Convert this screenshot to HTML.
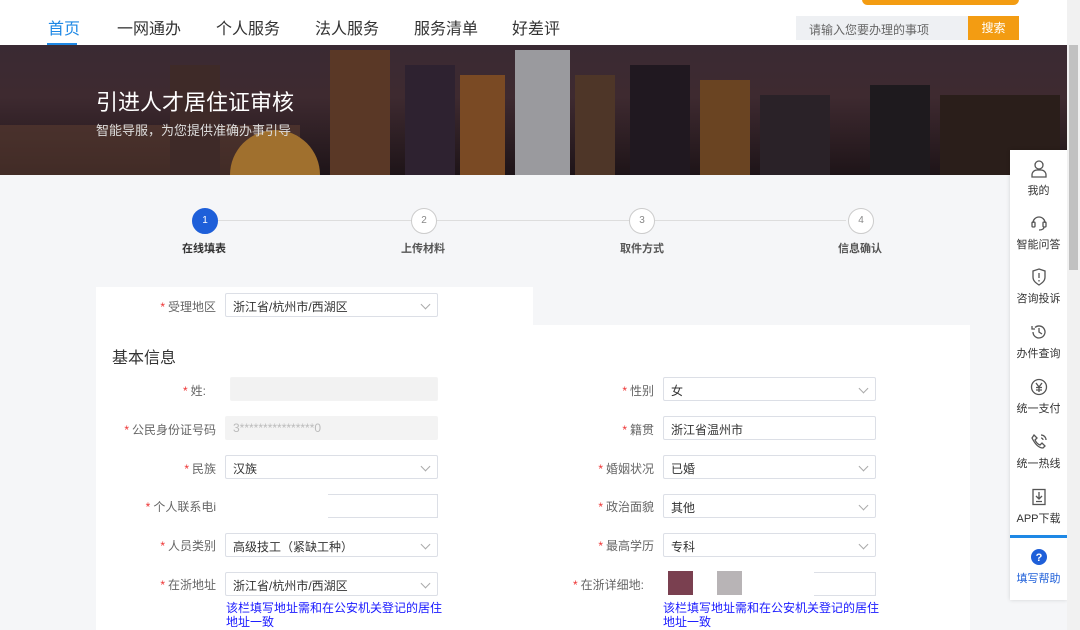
<!DOCTYPE html>
<html><head><meta charset="utf-8"><style>
*{margin:0;padding:0;box-sizing:border-box}
body{width:1080px;height:630px;overflow:hidden;background:#f5f6f8;font-family:"Liberation Sans","Noto Sans CJK SC",sans-serif;position:relative;color:#333}
.nav{position:absolute;left:0;top:0;width:1067px;height:45px;background:#fff}
.nav a{position:absolute;top:15px;font-size:16px;color:#333}
.banner{position:absolute;left:0;top:45px;width:1067px;height:130px;background:linear-gradient(180deg,#3a2a33 0%,#3e2a30 40%,#1e1418 100%);overflow:hidden}
.b{position:absolute;bottom:0}
.sb{position:absolute;left:1067px;top:0;width:13px;height:630px;background:#f1f1f1}
.card{position:absolute;background:#fff}
.lbl{position:absolute;font-size:12px;color:#666;text-align:right;width:130px}
.lbl i{color:#e33;font-style:normal;margin-right:3px}
.inp{position:absolute;width:213px;height:24px;border:1px solid #dcdfe6;background:#fff;font-size:12px;color:#333;padding:4px 7px;border-radius:2px}
.inp.dis{background:#f3f3f3;border-color:#f3f3f3;color:#bbb}
.arr{position:absolute;right:8px;top:7px;width:7px;height:7px;border-right:1px solid #aaa;border-bottom:1px solid #aaa;transform:rotate(45deg)}
.hint{position:absolute;font-size:12px;color:#1a1aff;line-height:14px;width:220px}
.step{position:absolute;top:208px;width:26px;height:26px;border-radius:50%;border:1px solid #ccc;background:#fff;font-size:10px;color:#888;text-align:center;line-height:24px}
.sl{position:absolute;top:240px;font-size:11px;font-weight:bold;color:#555}
.side{position:absolute;left:1010px;top:150px;width:57px;height:450px;background:#fff;box-shadow:0 0 4px rgba(0,0,0,.15)}
.si{position:absolute;left:0;width:57px;text-align:center;font-size:11px;color:#333}
.si svg{display:block;margin:0 auto 4px}
</style></head><body>
<div class="nav">
<a style="left:48px;color:#1e88e5">首页</a>
<div style="position:absolute;left:47px;top:43px;width:30px;height:2px;background:#1e88e5"></div>
<a style="left:117px">一网通办</a><a style="left:216px">个人服务</a><a style="left:315px">法人服务</a><a style="left:414px">服务清单</a><a style="left:512px">好差评</a>
<div style="position:absolute;left:862px;top:-6px;width:157px;height:11px;background:#f39c12;border-radius:6px"></div>
<div style="position:absolute;left:796px;top:16px;width:172px;height:24px;background:#eef0f3;font-size:12px;color:#666;padding:5px 13px">请输入您要办理的事项</div>
<div style="position:absolute;left:968px;top:16px;width:51px;height:24px;background:#f39c12;color:#fff;font-size:12px;text-align:center;line-height:24px">搜索</div>
</div>
<div class="banner">
<div class="b" style="left:0;width:300px;height:50px;background:#5a3c30;opacity:.6"></div>
<div class="b" style="left:170px;width:50px;height:110px;background:#3e2a28"></div>
<div class="b" style="left:230px;width:90px;height:45px;background:#a0702e;border-radius:45px 45px 0 0"></div>
<div class="b" style="left:330px;width:60px;height:125px;background:#5a3826"></div>
<div class="b" style="left:405px;width:50px;height:110px;background:#2e2230"></div>
<div class="b" style="left:460px;width:45px;height:100px;background:#7a4a24"></div>
<div class="b" style="left:515px;width:55px;height:125px;background:#9a9a9e"></div>
<div class="b" style="left:575px;width:40px;height:100px;background:#4e3628"></div>
<div class="b" style="left:630px;width:60px;height:110px;background:#201820"></div>
<div class="b" style="left:700px;width:50px;height:95px;background:#6a4422"></div>
<div class="b" style="left:760px;width:70px;height:80px;background:#2a2228"></div>
<div class="b" style="left:870px;width:60px;height:90px;background:#1e1a1e"></div>
<div class="b" style="left:940px;width:120px;height:80px;background:#2a1e1a"></div>
<div style="position:absolute;left:96px;top:40px;font-size:22px;color:#fff">引进人才居住证审核</div>
<div style="position:absolute;left:96px;top:75px;font-size:13px;color:#ddd">智能导服，为您提供准确办事引导</div>
</div>
<div style="position:absolute;left:218px;top:220px;width:628px;height:1px;background:#ddd"></div>
<div class="step" style="left:192px;background:#1e5fd9;border-color:#1e5fd9;color:#fff">1</div>
<div class="step" style="left:411px">2</div>
<div class="step" style="left:629px">3</div>
<div class="step" style="left:848px">4</div>
<div class="sl" style="left:182px;color:#333">在线填表</div>
<div class="sl" style="left:401px">上传材料</div>
<div class="sl" style="left:620px">取件方式</div>
<div class="sl" style="left:838px">信息确认</div>
<div class="card" style="left:96px;top:287px;width:437px;height:40px"></div>
<div class="card" style="left:96px;top:325px;width:874px;height:305px"></div>
<div style="position:absolute;left:112px;top:344px;font-size:16px;color:#333">基本信息</div>

<div class="lbl" style="left:86px;top:298px"><i>*</i>受理地区</div>
<div class="inp" style="left:225px;top:293px">浙江省/杭州市/西湖区<span class="arr"></span></div>

<div class="lbl" style="left:76px;top:382px"><i>*</i>姓:</div>
<div class="inp dis" style="left:230px;top:377px;width:208px;background:#f2f2f2"></div>
<div class="lbl" style="left:86px;top:421px"><i>*</i>公民身份证号码</div>
<div class="inp dis" style="left:225px;top:416px">3****************0</div>
<div class="lbl" style="left:86px;top:460px"><i>*</i>民族</div>
<div class="inp" style="left:225px;top:455px">汉族<span class="arr"></span></div>
<div class="lbl" style="left:86px;top:498px"><i>*</i>个人联系电i</div>
<div class="inp" style="left:225px;top:494px;border-color:#fff;border-right-color:#dcdfe6"></div>
<div style="position:absolute;left:328px;top:494px;width:110px;height:24px;border:1px solid #dcdfe6;border-left:none"></div>
<div class="lbl" style="left:86px;top:537px"><i>*</i>人员类别</div>
<div class="inp" style="left:225px;top:533px">高级技工（紧缺工种）<span class="arr"></span></div>
<div class="lbl" style="left:86px;top:576px"><i>*</i>在浙地址</div>
<div class="inp" style="left:225px;top:572px">浙江省/杭州市/西湖区<span class="arr"></span></div>
<div class="hint" style="left:226px;top:601px">该栏填写地址需和在公安机关登记的居住地址一致</div>

<div class="lbl" style="left:524px;top:382px"><i>*</i>性别</div>
<div class="inp" style="left:663px;top:377px">女<span class="arr"></span></div>
<div class="lbl" style="left:524px;top:421px"><i>*</i>籍贯</div>
<div class="inp" style="left:663px;top:416px">浙江省温州市<span style="position:absolute;left:80px;top:0;width:48px;height:22px;background:#fff"></span></div>
<div class="lbl" style="left:524px;top:460px"><i>*</i>婚姻状况</div>
<div class="inp" style="left:663px;top:455px">已婚<span class="arr"></span></div>
<div class="lbl" style="left:524px;top:498px"><i>*</i>政治面貌</div>
<div class="inp" style="left:663px;top:494px">其他<span class="arr"></span></div>
<div class="lbl" style="left:524px;top:537px"><i>*</i>最高学历</div>
<div class="inp" style="left:663px;top:533px">专科<span class="arr"></span></div>
<div class="lbl" style="left:514px;top:576px"><i>*</i>在浙详细地:</div>
<div class="inp" style="left:663px;top:572px;border-color:#fff;border-right-color:#dcdfe6"></div>
<div style="position:absolute;left:668px;top:571px;width:25px;height:24px;background:#7a4050"></div>
<div style="position:absolute;left:717px;top:571px;width:25px;height:24px;background:#b8b4b6"></div>
<div style="position:absolute;left:814px;top:572px;width:62px;height:24px;border:1px solid #dcdfe6;border-left:none"></div>
<div class="hint" style="left:663px;top:601px">该栏填写地址需和在公安机关登记的居住地址一致</div>

<div class="side">
<div class="si" style="top:10px"><svg width="16" height="18" viewBox="0 0 16 18" fill="none" stroke="#555" stroke-width="1.3"><circle cx="8" cy="5" r="4"/><path d="M1 17v-2a5 5 0 0 1 5-5h4a5 5 0 0 1 5 5v2z"/></svg>我的</div>
<div class="si" style="top:64px"><svg width="18" height="18" viewBox="0 0 18 18" fill="none" stroke="#555" stroke-width="1.3"><path d="M3 9a6 6 0 0 1 12 0"/><rect x="2" y="8" width="3" height="5" rx="1"/><rect x="13" y="8" width="3" height="5" rx="1"/><path d="M14 13q0 3-5 3"/></svg>智能问答</div>
<div class="si" style="top:118px"><svg width="16" height="18" viewBox="0 0 16 18" fill="none" stroke="#555" stroke-width="1.3"><path d="M8 1l6 2v6c0 4-3 6-6 8-3-2-6-4-6-8V3z"/><path d="M8 5v5M8 12v1.5"/></svg>咨询投诉</div>
<div class="si" style="top:173px"><svg width="18" height="18" viewBox="0 0 18 18" fill="none" stroke="#555" stroke-width="1.3"><path d="M3 9a6 6 0 1 0 2-4.5"/><path d="M2 3v3h3"/><path d="M9 5v4l3 2"/></svg>办件查询</div>
<div class="si" style="top:228px"><svg width="18" height="18" viewBox="0 0 18 18" fill="none" stroke="#555" stroke-width="1.3"><circle cx="9" cy="9" r="7.5"/><path d="M6 5l3 4 3-4M9 9v5M6 9.5h6M6 12h6"/></svg>统一支付</div>
<div class="si" style="top:283px"><svg width="18" height="18" viewBox="0 0 18 18" fill="none" stroke="#555" stroke-width="1.3"><path d="M4 2l3 3-2 2q2 4 5 5l2-2 3 3-2 2Q7 15 2 5z"/><path d="M11 2a5 5 0 0 1 5 5M11 5a2 2 0 0 1 2 2"/></svg>统一热线</div>
<div class="si" style="top:338px"><svg width="16" height="18" viewBox="0 0 16 18" fill="none" stroke="#555" stroke-width="1.3"><rect x="2" y="1.5" width="12" height="15"/><path d="M8 4v7M5 8l3 3 3-3M5 13.5h6"/></svg>APP下载</div>
<div style="position:absolute;left:0;top:385px;width:57px;height:3px;background:#1e88e5"></div>
<div class="si" style="top:398px;color:#1e5fd9"><svg width="18" height="18" viewBox="0 0 18 18"><circle cx="9" cy="9" r="8" fill="#1e5fd9"/><text x="9" y="13" font-size="11" font-weight="bold" fill="#fff" text-anchor="middle" font-family="Liberation Sans">?</text></svg>填写帮助</div>
</div>
<div class="sb"><div style="position:absolute;left:2px;top:45px;width:9px;height:225px;background:#c1c1c1"></div></div>
</body></html>
